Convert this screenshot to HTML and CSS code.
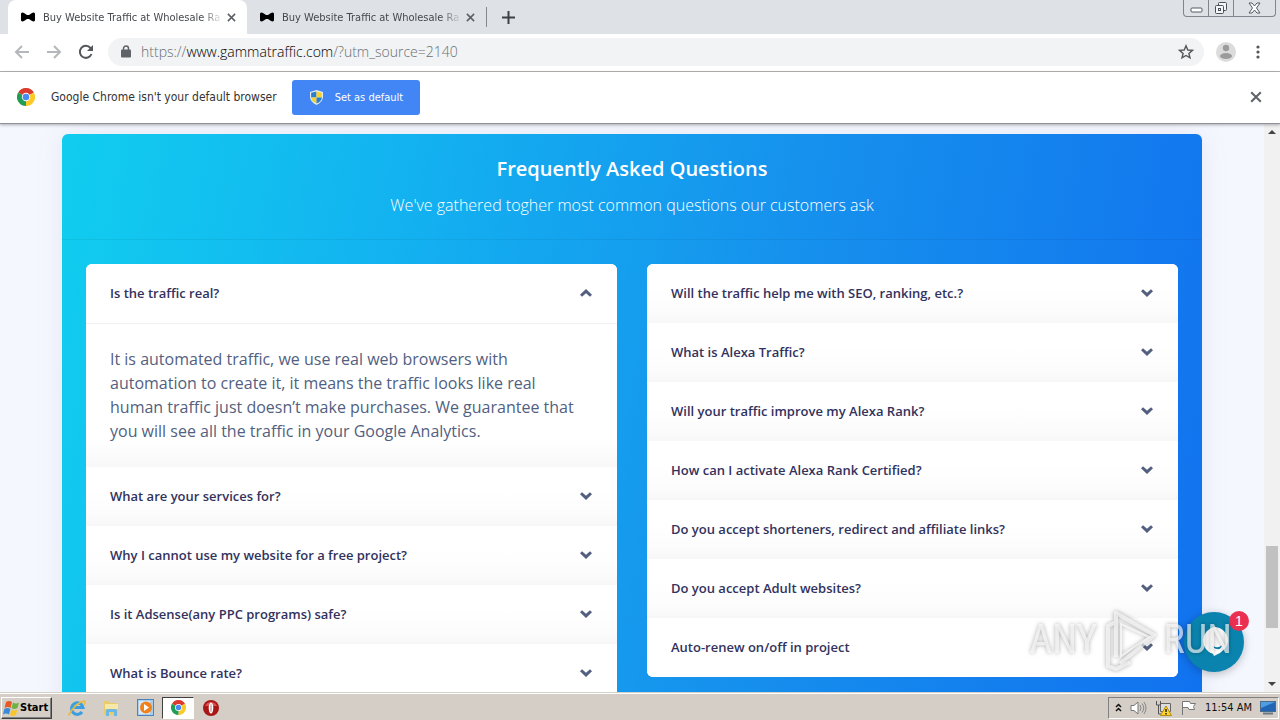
FILE: index.html
```html
<!DOCTYPE html>
<html lang="en">
<head>
<meta charset="utf-8">
<title>Buy Website Traffic at Wholesale Rates</title>
<link rel="stylesheet" href="styles.css">
</head>
<body>
<svg class="defs" aria-hidden="true">
  <symbol id="bow" viewBox="0 0 16 10"><path d="M1 1.500Q2 0 4 1l3 2h2l3-2q2-1 3 .5v7Q14 10 12 9L9 7H7L4 9q-2 1-3-.5z"/></symbol>
  <symbol id="cross" viewBox="0 0 10 10"><path d="M1 1l8 8M9 1l-8 8" fill="none" stroke="currentColor" stroke-width="1.700"/></symbol>
  <symbol id="down" viewBox="0 0 12 8"><path d="M0 2.200 2 .2l4 3.600L10 .2l2 2L6 8z"/></symbol>
  <symbol id="chrome" viewBox="0 0 18 18"><path d="M9 9 1.200 4.500A9 9 0 0 1 16.800 4.500z" fill="#db3a2c"/><path d="M9 9 16.800 4.500A9 9 0 0 1 9 18z" fill="#fdc927"/><path d="M9 9v9A9 9 0 0 1 1.200 4.500z" fill="#1f9d55"/><path d="M12.500 11 9 18h1z" fill="#fdc927"/><circle cx="9" cy="9" r="4.200" fill="#fff"/><circle cx="9" cy="9" r="3.300" fill="#4a8af4"/></symbol>
</svg>

<header class="tabs">
  <div class="tab tab-active">
    <svg class="bow"><use href="#bow"/></svg><span class="tab-title">Buy Website Traffic at Wholesale Ra</span>
    <button class="plain" aria-label="Close tab"><svg class="x-small"><use href="#cross"/></svg></button>
  </div>
  <div class="tab">
    <svg class="bow"><use href="#bow"/></svg><span class="tab-title">Buy Website Traffic at Wholesale Ra</span>
    <button class="plain" aria-label="Close tab"><svg class="x-small"><use href="#cross"/></svg></button>
  </div>
  <button class="plain new-tab" aria-label="New tab"><svg width="13" height="13" viewBox="0 0 13 13"><path d="M6.500 0v13M0 6.500h13" stroke="#3c4043" stroke-width="2"/></svg></button>
  <div class="window-buttons">
    <button class="low" aria-label="Minimize"><svg width="13" height="6" viewBox="0 0 13 6"><rect x="1" y="1" width="11" height="4" rx="1" fill="#fff" stroke="#555b66"/></svg></button>
    <button aria-label="Restore"><svg width="14" height="14" viewBox="0 0 14 14"><g fill="#f4f5f7" stroke="#4b505a"><rect x="4.500" y="1.500" width="8" height="8" rx="1"/><rect x="1.500" y="4.500" width="8" height="8" rx="1"/><rect x="4.500" y="7.500" width="2" height="2"/></g></svg></button>
    <button class="wide" aria-label="Close"><svg width="13" height="12" viewBox="0 0 13 12"><path d="M1 1h3l2.500 3L9 1h3L8.500 6l3.500 5H9L6.500 8 4 11H1l3.500-5z" fill="#fff" stroke="#555b66"/></svg></button>
  </div>
</header>

<nav class="toolbar">
  <button class="plain nav-btn" aria-label="Back"><svg width="16" height="14" viewBox="0 0 16 14"><path d="M15 7H2M8 1 2 7l6 6" fill="none" stroke="#b5b7ba" stroke-width="2"/></svg></button>
  <button class="plain nav-btn" aria-label="Forward"><svg width="16" height="14" viewBox="0 0 16 14"><path d="M1 7h13M8 1l6 6-6 6" fill="none" stroke="#b5b7ba" stroke-width="2"/></svg></button>
  <button class="plain nav-btn" aria-label="Reload"><svg width="16" height="16" viewBox="0 0 16 16"><path d="M13.500 10A6 6 0 1 1 12.500 4L14 6" fill="none" stroke="#54575b" stroke-width="2"/><path d="M15 1v6H9z" fill="#54575b"/></svg></button>
  <div class="address">
    <svg width="10" height="13" viewBox="0 0 10 13"><path d="M2.500 5V3.500a2.500 2.500 0 0 1 5 0V5" fill="none" stroke="#5f6368" stroke-width="1.500"/><rect y="4.500" width="10" height="8" rx="1" fill="#5f6368"/></svg>
    <a class="url" href="#faq">https://<b>www.gammatraffic.com</b>/?utm_source=2140</a>
    <button class="plain" aria-label="Bookmark"><svg width="16" height="16" viewBox="0 0 16 16"><path d="M8 1.800l1.800 4.200 4.600.4-3.500 3 1.100 4.500L8 11.500l-4 2.400 1.100-4.500-3.500-3 4.600-.4z" fill="none" stroke="#54575b" stroke-width="1.400"/></svg></button>
  </div>
  <button class="plain profile" aria-label="Profile"><svg width="20" height="20" viewBox="0 0 20 20"><circle cx="10" cy="10" r="10" fill="#dcdcdc"/><circle cx="10" cy="6" r="3.200" fill="#9b9b9b"/><ellipse cx="10" cy="14" rx="6" ry="3" fill="#9b9b9b"/></svg></button>
  <button class="plain menu" aria-label="Menu"><svg width="4" height="14" viewBox="0 0 4 14"><g fill="#54575b"><circle cx="2" cy="2" r="1.600"/><circle cx="2" cy="7" r="1.600"/><circle cx="2" cy="12" r="1.600"/></g></svg></button>
</nav>

<section class="infobar">
  <svg width="18" height="18"><use href="#chrome"/></svg>
  <span class="info-text">Google Chrome isn't your default browser</span>
  <button class="default-btn"><svg width="13" height="15" viewBox="0 0 14 16"><path d="M7 0 14 2v5q0 6-7 9-7-3-7-9V2z" fill="#e5edf2"/><path d="M7 1.500V8H1.200V3z" fill="#2c7fd0"/><path d="M7 1.500V8h5.800V3z" fill="#f7d32d"/><path d="M7 14.500V8H1.200q.3 4.500 5.800 6.500z" fill="#f7d32d"/><path d="M7 14.500V8h5.800q-.3 4.500-5.800 6.500z" fill="#2c7fd0"/></svg>Set as default</button>
  <button class="plain info-close" aria-label="Dismiss"><svg class="x-large"><use href="#cross"/></svg></button>
</section>

<div class="viewport">
<main class="page" id="faq">
  <section class="faq">
    <header class="faq-head">
      <h1>Frequently Asked Questions</h1>
      <p>We've gathered togher most common questions our customers ask</p>
    </header>
    <div class="columns">
      <div class="accordion">
        <button class="question open" aria-expanded="true">Is the traffic real?<svg class="chev up"><use href="#down"/></svg></button>
        <p class="answer">It is automated traffic, we use real web browsers with automation to create it, it means the traffic looks like real human traffic just doesn’t make purchases. We guarantee that you will see all the traffic in your Google Analytics.</p>
        <button class="question">What are your services for?<svg class="chev"><use href="#down"/></svg></button>
        <button class="question">Why I cannot use my website for a free project?<svg class="chev"><use href="#down"/></svg></button>
        <button class="question">Is it Adsense(any PPC programs) safe?<svg class="chev"><use href="#down"/></svg></button>
        <button class="question">What is Bounce rate?<svg class="chev"><use href="#down"/></svg></button>
      </div>
      <div class="accordion">
        <button class="question">Will the traffic help me with SEO, ranking, etc.?<svg class="chev"><use href="#down"/></svg></button>
        <button class="question">What is Alexa Traffic?<svg class="chev"><use href="#down"/></svg></button>
        <button class="question">Will your traffic improve my Alexa Rank?<svg class="chev"><use href="#down"/></svg></button>
        <button class="question">How can I activate Alexa Rank Certified?<svg class="chev"><use href="#down"/></svg></button>
        <button class="question">Do you accept shorteners, redirect and affiliate links?<svg class="chev"><use href="#down"/></svg></button>
        <button class="question">Do you accept Adult websites?<svg class="chev"><use href="#down"/></svg></button>
        <button class="question">Auto-renew on/off in project<svg class="chev"><use href="#down"/></svg></button>
      </div>
    </div>
  </section>
</main>
<div class="scrollbar" aria-hidden="true">
  <svg width="8" height="4" viewBox="0 0 8 4"><path d="M0 4l4-4 4 4z" fill="#444"/></svg>
  <div class="track"><div class="thumb"></div></div>
  <svg width="8" height="4" viewBox="0 0 8 4"><path d="M0 0l4 4 4-4z" fill="#444"/></svg>
</div>
<button class="chat" aria-label="Open chat"><svg width="28" height="30" viewBox="0 0 28 30"><path d="M14 0a14 14 0 0 1 14 14q0 9-14 15l-1-2A14 14 0 0 1 14 0z" fill="#fff"/><path d="M13 19q5 3 9-1-1 5-5 4-3 0-4-3z" fill="#0a84ae"/></svg><span class="badge">1</span></button>
<div class="watermark"><span>ANY</span><svg width="56" height="64" viewBox="0 0 56 64"><path d="M13 49V5l38 22-34 29M13 14 5 18v40l8 3 14-7" fill="none" stroke="currentColor" stroke-width="4" stroke-linejoin="round"/><path d="M18 16v32l28-19z" fill="none" stroke="currentColor" stroke-width="2"/></svg><span>RUN</span></div>
</div>

<footer class="taskbar">
  <button class="start"><svg width="17" height="16" viewBox="0 0 17 16"><path d="M3 2q3-2 6 0L7.500 8q-3-2-6 0z" fill="#e65a28"/><path d="M10 2.500q3 2 6 0L14.500 8q-3 2-6 .3z" fill="#6db33f"/><path d="M1.300 9q3-2 6 0L6 14.500q-3-2-6 0z" fill="#3b8ad8"/><path d="M8.300 9.500q3 2 6 0L13 15q-3 2-6 0z" fill="#f8c62b"/></svg>Start</button>
  <div class="apps">
    <button class="plain app" aria-label="Internet Explorer"><svg width="18" height="18" viewBox="0 0 18 18"><path d="M14 13a5.800 5.800 0 1 1 1-4.500H5" fill="none" stroke="#3a9fe0" stroke-width="3"/><path d="M2 15Q-1 18 4 11T16 2q2 0 0 4" fill="none" stroke="#e9b93a" stroke-width="1.500"/></svg></button>
    <button class="plain app" aria-label="Explorer"><svg width="18" height="18" viewBox="0 0 18 18"><path d="M2 2h5l1 2h8v12H2z" fill="#e8cb6b"/><path d="M3 5h13v5H3z" fill="#f7e8a8"/><path d="M4 17v-5q0-2 2-2h7q2 0 2 2v5h-3v-4H7v4z" fill="#6bb7e6"/></svg></button>
    <button class="plain app" aria-label="Media Player"><svg width="17" height="17" viewBox="0 0 17 17"><rect x=".5" y=".5" width="16" height="16" fill="#a9cdec" stroke="#4b84bd"/><rect x="2" y="2" width="11" height="13" fill="#d9e9f5"/><circle cx="9" cy="8.500" r="6" fill="#f1821b"/><path d="M7 5v7l5-3.500z" fill="#fff"/></svg></button>
    <button class="plain app current" aria-label="Chrome"><svg width="15" height="15"><use href="#chrome"/></svg></button>
    <button class="plain app" aria-label="Opera"><svg width="16" height="16" viewBox="0 0 16 16"><circle cx="8" cy="8" r="8" fill="#a81616"/><path d="M2 6a6.500 6.500 0 0 1 12 0z" fill="#d85050"/><ellipse cx="8" cy="8" rx="2.300" ry="5.500" fill="#fff"/><ellipse cx="8" cy="8" rx="1" ry="4.500" fill="#d7b9b9"/></svg></button>
  </div>
  <div class="tray">
    <svg width="7" height="9" viewBox="0 0 7 9"><path d="M1 4l2.500-2.500L6 4M1 8l2.500-2.500L6 8" fill="none" stroke="#111" stroke-width="1.500"/></svg>
    <svg width="17" height="14" viewBox="0 0 17 14"><path d="M1 4.500h3L8 1v12L4 9.500H1z" fill="#fff" stroke="#777"/><path d="M10 4q2 3 0 6M12 2.500q3.500 4.500 0 9M14 1q4 6 0 12" fill="none" stroke="#888"/></svg>
    <svg width="17" height="16" viewBox="0 0 17 16"><path d="M5.500 3.500h10v8h-10z" fill="#ddd" stroke="#666"/><path d="M1.500 1v4h4V1M3.500 5v9h6" fill="none" stroke="#555"/><path d="M11 6l5.500 9.500h-11z" fill="#ffd52e" stroke="#b58d08"/><path d="M11 9v3M11 13v1.500" stroke="#222" stroke-width="1.500"/></svg>
    <svg width="17" height="15" viewBox="0 0 17 15"><path d="M2.500 15V1.500h7l1 2h5l-2 3 1 3H9l-1-2H3" fill="#fff" stroke="#777"/></svg>
    <time>11:54 AM</time>
    <svg width="16" height="14" viewBox="0 0 16 14"><rect x=".5" y=".5" width="15" height="10" fill="#2165b5" stroke="#476b91"/><path d="M1 1h14L1 7z" fill="#4e9ee4"/><path d="M3 12.500h10" stroke="#6b7886" stroke-width="2"/></svg>
  </div>
</footer>
</body>
</html>
```
FILE: styles.css
```css
* { box-sizing: border-box; }
body {
  margin: 0;
  height: 100vh;
  display: flex;
  flex-direction: column;
  overflow: hidden;
  background: #fff;
  color: #333;
  font-family: "DejaVu Sans Condensed", "DejaVu Sans", sans-serif;
  font-size: 12px;
}
button { font: inherit; color: inherit; }
svg { display: block; flex: none; }
.defs { position: absolute; width: 0; height: 0; }
.plain {
  display: flex;
  align-items: center;
  justify-content: center;
  padding: 0;
  border: 0;
  background: none;
}

/* Tab strip */
.tabs { display: flex; flex: none; height: 34px; padding-left: 8px; background: #dee1e6; }
.tab { display: flex; align-items: center; width: 239px; padding: 0 11px 0 12px; color: #45484d; }
.tab-active { background: #fff; border-radius: 8px 8px 0 0; }
.bow { width: 16px; height: 10px; }
.tab-title {
  flex: 1;
  min-width: 0;
  margin: 0 4px 0 7px;
  white-space: nowrap;
  font-size: 11px;
  -webkit-mask-image: linear-gradient(to right, #000 88%, transparent);
  mask-image: linear-gradient(to right, #000 88%, transparent);
}
.x-small { width: 9px; height: 9px; color: #5b5e63; }
.new-tab { width: 44px; margin: 7px 0; border-left: 1px solid #85888d; }
.window-buttons {
  display: flex;
  height: 17px;
  margin: 0 4px 0 auto;
  border: 1px solid #81858d;
  border-top: 0;
  border-radius: 0 0 4px 4px;
}
.window-buttons button {
  display: flex;
  align-items: center;
  justify-content: center;
  width: 25px;
  padding: 0;
  border: 0;
  border-right: 1px solid #81858d;
  background: none;
}
.window-buttons .low { align-items: flex-end; padding-bottom: 3px; }
.window-buttons .wide { width: 41px; border-right: 0; }

/* Toolbar */
.toolbar {
  display: flex;
  align-items: center;
  flex: none;
  height: 38px;
  padding: 0 16px 2px 6px;
  border-bottom: 1px solid #b4b4b4;
}
.nav-btn { width: 32px; height: 28px; }
.address {
  display: flex;
  align-items: center;
  flex: 1;
  height: 28px;
  margin-left: 6px;
  padding: 0 10px 0 13px;
  border-radius: 14px;
  background: #f1f3f4;
}
.url {
  flex: 1;
  margin-left: 10px;
  color: #6b6e73;
  font-family: "Open Sans", sans-serif;
  font-size: 14px;
  font-weight: 300;
  text-decoration: none;
}
.url b { font-weight: 300; color: #000; }
.profile { margin-left: 12px; }
.menu { width: 12px; margin-left: 16px; }

/* Default browser notice */
.infobar {
  display: flex;
  align-items: center;
  flex: none;
  height: 52px;
  padding: 0 18px 1px 17px;
  border-bottom: 1px solid #8f9296;
  z-index: 1;
  box-shadow: 0 1px 3px rgba(0, 0, 0, .3);
}
.info-text { margin: 0 15px 0 16px; }
.default-btn {
  display: flex;
  align-items: center;
  gap: 12px;
  height: 35px;
  padding: 0 17px 0 18px;
  border: 0;
  border-radius: 3px;
  background: #4285f4;
  color: #fff;
  font-size: 11px;
}
.info-close { margin-left: auto; }
.x-large { width: 12px; height: 12px; color: #5f6368; }

/* Page */
.viewport { position: relative; display: flex; flex: 1; min-height: 0; }
.page {
  flex: 1;
  padding: 10px 62px 0;
  overflow: hidden;
  background: #f5f7ff;
  font-family: "Open Sans", sans-serif;
}
.faq {
  min-height: 640px;
  border-radius: 6px;
  background: linear-gradient(100deg, #11cdef, #13b0f0 30%, #1691ed 60%, #1171ef);
  box-shadow: 0 0 24px rgba(136, 152, 170, .15);
}
.faq-head {
  height: 106px;
  padding-top: 20px;
  border-bottom: 1px solid rgba(0, 0, 0, .05);
  text-align: center;
  color: #fff;
}
h1 { margin: 0; font-size: 20px; line-height: 30px; font-weight: 600; }
.faq-head p { margin: 6px 0 0; font-size: 16px; line-height: 30px; font-weight: 300; }
.columns {
  display: grid;
  grid-template-columns: 1fr 1fr;
  align-items: start;
  gap: 30px;
  padding: 24px;
}
.accordion { overflow: hidden; border-radius: 6px; background: #fff; }
.question {
  display: flex;
  align-items: center;
  justify-content: space-between;
  width: 100%;
  height: 59px;
  padding: 0 25px 1px 24px;
  border: 0;
  background: linear-gradient(#fff 40%, #fcfcfc 80%, #f7f7f7);
  color: #32325d;
  font-size: 13px;
  font-weight: 600;
  text-align: left;
}
.question:last-child { background: #fff; }
.question.open { height: 60px; background: #fff; border-bottom: 1px solid #f1f1f4; }
.chev { width: 12px; height: 8px; fill: #525f7f; }
.up { transform: rotate(180deg); }
.answer {
  margin: 0;
  padding: 23px 32px 24px 24px;
  background: linear-gradient(#fff 80%, #f8f8f8);
  color: #525f7f;
  font-size: 16px;
  line-height: 24px;
}

/* Scrollbar */
.scrollbar {
  display: flex;
  flex-direction: column;
  align-items: center;
  width: 16px;
  padding: 6px 0;
  background: #f1f1f1;
}
.track { display: flex; flex: 1; width: 100%; padding: 0 2px; }
.thumb { flex: 1; align-self: flex-end; height: 15%; margin-bottom: 54px; background: #c1c1c1; }

/* Floating widgets */
.chat {
  position: absolute;
  right: 36px;
  bottom: 20px;
  display: flex;
  align-items: center;
  justify-content: center;
  width: 60px;
  height: 60px;
  padding: 0;
  border: 0;
  border-radius: 50%;
  background: #0a84ae;
  box-shadow: 0 2px 8px rgba(0, 0, 0, .25);
}
.badge {
  position: absolute;
  top: -1px;
  right: -5px;
  width: 20px;
  border-radius: 50%;
  background: #eb2f50;
  color: #fff;
  font: 14px/20px "Liberation Sans", sans-serif;
}
.watermark {
  position: absolute;
  right: 48px;
  bottom: 20px;
  display: flex;
  align-items: center;
  gap: 5px;
  color: rgba(255, 255, 255, .65);
  filter: drop-shadow(0 0 2px rgba(0, 0, 0, .5));
  font: 400 40px/64px "Liberation Sans Narrow", "Roboto Condensed", "Roboto", sans-serif;
  pointer-events: none;
}

/* Taskbar */
.taskbar {
  display: flex;
  align-items: center;
  flex: none;
  height: 28px;
  padding: 2px 1px 0;
  border-top: 1px solid #d4d0c8;
  background: #d4cec7;
  box-shadow: inset 0 1px #fff;
  color: #111;
}
.start {
  display: flex;
  align-items: center;
  height: 22px;
  padding: 0 3px 0 1px;
  border: 1px solid;
  border-color: #fff #404040 #404040 #fff;
  background: #d4cec7;
  box-shadow: inset -1px -1px #808080;
  color: #000;
  font-size: 11px;
  font-weight: 700;
}
.apps { display: flex; margin-left: 8px; }
.app { width: 34px; height: 22px; }
.current {
  width: 32px;
  border: 1px solid;
  border-color: #404040 #fff #fff #404040;
  background: #fff;
}
.tray {
  display: flex;
  align-items: center;
  gap: 8px;
  height: 22px;
  margin-left: auto;
  padding: 0 2px 0 6px;
  border: 1px solid;
  border-color: #808080 #fff #fff #808080;
  font-size: 11px;
}
```
